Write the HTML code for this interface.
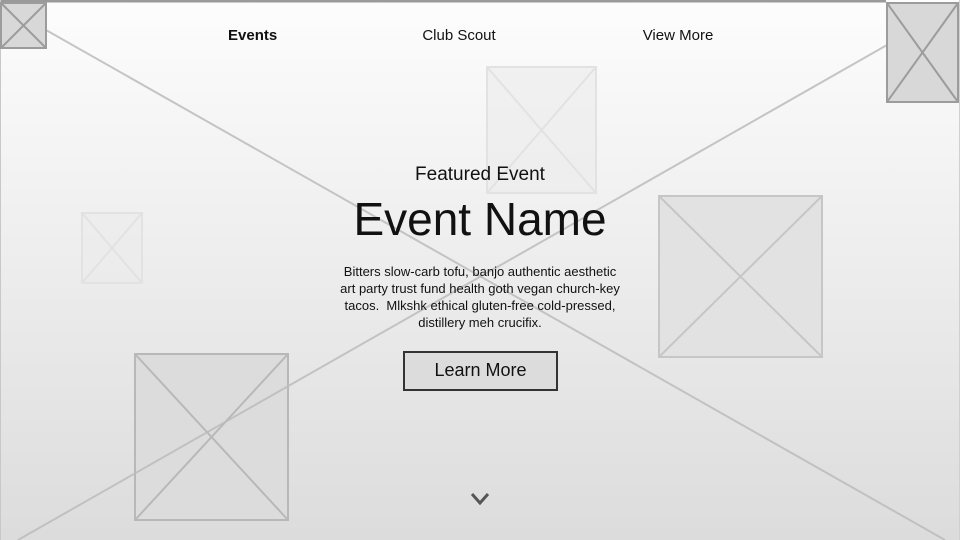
<!DOCTYPE html>
<html><head><meta charset="utf-8"><style>
html,body{margin:0;padding:0}
body{width:960px;height:540px;overflow:hidden;position:relative;background:linear-gradient(#fdfdfd,#dcdcdc);font-family:"Liberation Sans",sans-serif;color:#111}
svg{position:absolute;left:0;top:0}
.t{position:absolute;text-align:center;white-space:nowrap}
.nav{top:27px;font-size:15px}
</style></head><body>
<svg width="960" height="540">
<line x1="0" y1="1" x2="886" y2="1" stroke="#9a9a9a" stroke-width="3"/>
<line x1="0.5" y1="0" x2="0.5" y2="540" stroke="#c8c8c8"/>
<line x1="959.5" y1="0" x2="959.5" y2="540" stroke="#d0d0d0"/>
<g fill="#e2e2e2" stroke="#c6c6c6" stroke-width="2">
<rect x="659" y="196" width="163" height="161"/><path d="M659 196L822 357M822 196L659 357"/>
</g>
<g fill="#dcdcdc" stroke="#b8b8b8" stroke-width="2">
<rect x="135" y="354" width="153" height="166"/><path d="M135 354L288 520M288 354L135 520"/>
</g>
<line x1="46" y1="30" x2="945" y2="540" stroke="#bcbcbc" stroke-width="2" opacity="0.85"/>
<line x1="887" y1="45" x2="18" y2="540" stroke="#bcbcbc" stroke-width="2" opacity="0.85"/>
<g fill="#ebebeb" stroke="#e2e2e2" stroke-width="2" fill-opacity="0.6">
<rect x="487" y="67" width="109" height="126"/><path d="M487 67L596 193M596 67L487 193"/>
<rect x="82" y="213" width="60" height="70"/><path d="M82 213L142 283M142 213L82 283"/>
</g>
<g fill="#d8d8d8" stroke="#9c9c9c" stroke-width="2">
<rect x="1" y="3" width="45" height="45"/><path d="M1 3L46 48M46 3L1 48"/>
<rect x="887" y="3" width="71" height="99"/><path d="M887 3L958 102M958 3L887 102"/>
</g>
<rect x="404" y="352" width="153" height="38" fill="#dcdcdc" stroke="#333" stroke-width="2"/>
<path d="M472 494L480 503L488 494" fill="none" stroke="#555" stroke-width="3"/>
</svg>
<div class="t nav" style="left:228px;font-weight:bold">Events</div>
<div class="t nav" style="left:409px;width:100px">Club Scout</div>
<div class="t nav" style="left:628px;width:100px">View More</div>
<div class="t" style="left:330px;width:300px;top:164px;font-size:19px">Featured Event</div>
<div class="t" style="left:280px;width:400px;top:193px;font-size:46px;line-height:52px">Event Name</div>
<div class="t" style="left:280px;width:400px;top:263px;font-size:13px;line-height:17px">Bitters slow-carb tofu, banjo authentic aesthetic<br>art party trust fund health goth vegan church-key<br>tacos.&nbsp; Mlkshk ethical gluten-free cold-pressed,<br>distillery meh crucifix.</div>
<div class="t" style="left:404px;width:153px;top:360px;font-size:18px">Learn More</div>
</body></html>
